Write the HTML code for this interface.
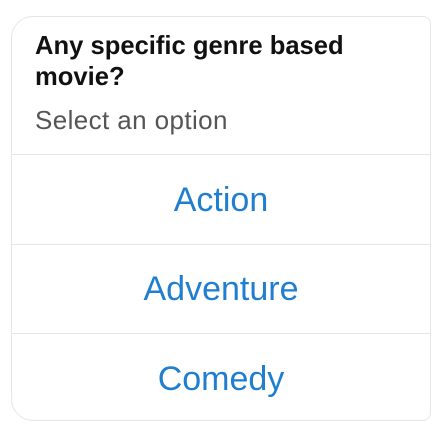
<!DOCTYPE html>
<html><head><style>
html,body{margin:0;padding:0;background:#fff;width:437px;height:445px;overflow:hidden}
.card{position:absolute;left:11px;top:16px;width:420px;height:405px;border:1px solid #e6e6e6;border-radius:22px 8px 8px 22px;box-sizing:border-box;font-family:"Liberation Sans",sans-serif}
.t{position:absolute;left:23px;top:14px;font-weight:bold;font-size:25.6px;line-height:31px;color:#111;width:390px}
.s{position:absolute;left:23px;top:87px;font-size:26px;color:#555;line-height:32px;letter-spacing:0.4px}
.d{position:absolute;left:0;right:0;height:1px;background:#e6e6e6}
.o{position:absolute;left:0;right:0;text-align:center;font-size:34px;color:#1f7ed0;line-height:40px}
</style></head><body>
<div class="card">
<div class="t">Any specific genre based movie?</div>
<div class="s">Select an option</div>
<div class="d" style="top:137px"></div>
<div class="o" style="top:163px">Action</div>
<div class="d" style="top:227px"></div>
<div class="o" style="top:252px">Adventure</div>
<div class="d" style="top:316px"></div>
<div class="o" style="top:342px">Comedy</div>
</div>
</body></html>
